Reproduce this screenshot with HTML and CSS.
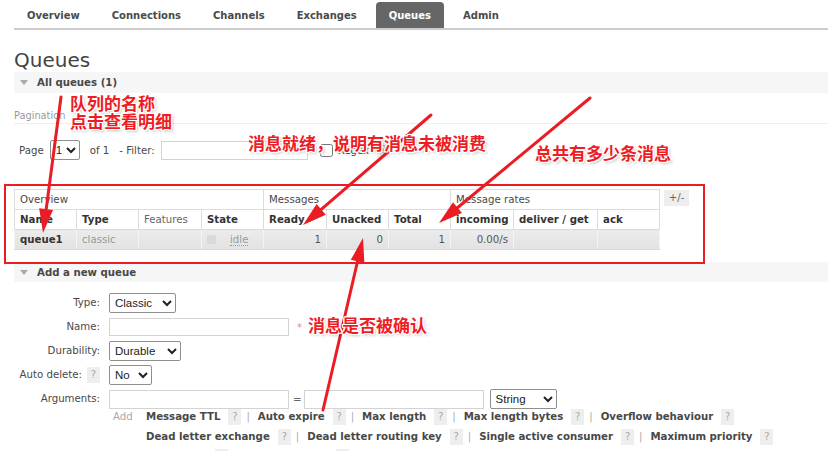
FILE: index.html
```html
<!DOCTYPE html>
<html lang="en">
<head>
<meta charset="utf-8">
<title>RabbitMQ Management - Queues</title>
<link rel="stylesheet" href="styles.css">
</head>
<body>
<div class="page">
  <nav class="menu">
    <ul>
      <li>Overview</li>
      <li>Connections</li>
      <li>Channels</li>
      <li>Exchanges</li>
      <li class="active">Queues</li>
      <li>Admin</li>
    </ul>
  </nav>
  <h1 class="title">Queues</h1>

  <section class="section">
    <h2 class="section-head"><span class="tri"></span>All queues (1)</h2>
    <div class="pagination-title">Pagination</div>
    <div class="page-row">
      <span>Page</span>
      <select class="sel sel-page"><option>1</option></select>
      <span class="of">of 1</span>
      <span class="filter-label">- Filter:</span>
      <input class="txt filter" type="text">
      <input class="chk" type="checkbox">
      <span class="regex">Regex</span>
      <span class="help help-regex">?</span>
    </div>
    <div class="table-row">
      <table class="list">
        <colgroup>
          <col class="c62"><col class="c62"><col class="c63"><col class="c62">
          <col class="c63"><col class="c62"><col class="c62">
          <col class="c63"><col class="c84"><col class="c62">
        </colgroup>
        <thead>
          <tr class="group">
            <th colspan="4">Overview</th>
            <th colspan="3">Messages</th>
            <th colspan="3">Message rates</th>
          </tr>
          <tr class="cols">
            <th>Name</th><th>Type</th><th class="plain">Features</th><th>State</th>
            <th>Ready</th><th>Unacked</th><th>Total</th>
            <th>incoming</th><th>deliver / get</th><th>ack</th>
          </tr>
        </thead>
        <tbody>
          <tr class="data">
            <td class="name">queue1</td>
            <td class="muted">classic</td>
            <td></td>
            <td class="state"><span class="state-box"></span><abbr class="idle">idle</abbr></td>
            <td class="num">1</td>
            <td class="num">0</td>
            <td class="num">1</td>
            <td class="num">0.00/s</td>
            <td></td>
            <td></td>
          </tr>
        </tbody>
      </table>
      <span class="toggle">+/-</span>
    </div>
  </section>

  <section class="section">
    <h2 class="section-head section-add"><span class="tri"></span>Add a new queue</h2>
    <form class="form">
      <label class="lbl">Type:</label>
      <div class="ctl"><select class="sel sel-type"><option>Classic</option></select></div>

      <label class="lbl">Name:</label>
      <div class="ctl"><input class="txt txt-name" type="text"><span class="req">*</span></div>

      <label class="lbl">Durability:</label>
      <div class="ctl"><select class="sel sel-dur"><option>Durable</option></select></div>

      <label class="lbl lbl-help">Auto delete: <span class="help">?</span></label>
      <div class="ctl"><select class="sel sel-no"><option>No</option></select></div>

      <label class="lbl">Arguments:</label>
      <div class="ctl"><input class="txt txt-arg" type="text"><span class="eq">=</span><input class="txt txt-arg" type="text"><select class="sel sel-str"><option>String</option></select></div>
    </form>
    <div class="add-block">
      <span class="add-link">Add</span>
      <div class="opts">
        <div class="opts-row"><span class="opt">Message TTL</span><span class="help">?</span><span class="sep">|</span><span class="opt">Auto expire</span><span class="help">?</span><span class="sep">|</span><span class="opt">Max length</span><span class="help">?</span><span class="sep">|</span><span class="opt">Max length bytes</span><span class="help">?</span><span class="sep">|</span><span class="opt">Overflow behaviour</span><span class="help">?</span></div>
        <div class="opts-row"><span class="opt">Dead letter exchange</span><span class="help">?</span><span class="sep">|</span><span class="opt">Dead letter routing key</span><span class="help">?</span><span class="sep">|</span><span class="opt">Single active consumer</span><span class="help">?</span><span class="sep">|</span><span class="opt">Maximum priority</span><span class="help">?</span></div>
        <div class="opts-row"><span class="opt">Lazy mode</span><span class="help">?</span><span class="sep">|</span><span class="opt">Master locator</span><span class="help">?</span></div>
      </div>
    </div>
  </section>
</div>

<div class="annot">
  <div class="redbox"></div>
  <svg class="arrows" width="828" height="451" viewBox="0 0 828 451" xmlns="http://www.w3.org/2000/svg">
    <g stroke="#ea1c24" stroke-width="3" fill="none" stroke-linecap="round">
      <line x1="61" y1="97" x2="45.4" y2="215.2"/>
      <line x1="431" y1="115" x2="316.6" y2="213.3"/>
      <line x1="590" y1="98" x2="452.9" y2="211.5"/>
      <line x1="323" y1="410" x2="358.9" y2="255.5"/>
    </g>
    <g fill="#ea1c24">
      <polygon points="43,233 39.2,208.3 53,210.1"/>
      <polygon points="303,225 316.6,204.1 325.8,214.7"/>
      <polygon points="439,223 453,202.3 462,213.1"/>
      <polygon points="363,238 364.4,263 350.8,259.8"/>
    </g>
  </svg>
  <div class="note note-name">队列的名称<br>点击查看明细</div>
  <div class="note note-ready">消息就绪，说明有消息未被消费</div>
  <div class="note note-total">总共有多少条消息</div>
  <div class="note note-ack">消息是否被确认</div>
</div>
</body>
</html>
```

FILE: styles.css
```css
* { box-sizing: border-box; }
html { overflow: hidden; }
body {
  margin: 0;
  font-family: "DejaVu Sans", Verdana, sans-serif;
  font-size: 10.2px;
  color: #484848;
  background: #fff;
}
.page { padding-left: 14px; }

/* top menu */
.menu { height: 30px; border-bottom: 2px solid #ccc; }
.menu ul { list-style: none; margin: 0; padding: 2px 0 0; display: flex; gap: 6px; }
.menu li {
  height: 26px; line-height: 28px; padding: 0 13px;
  font-weight: bold; font-size: 10px; color: #4a4a4a;
  border-radius: 4px 4px 0 0;
}
.menu li.active { background: #666; color: #fff; }

.title { margin: 18px 0 0; font-size: 20px; line-height: 24px; font-weight: normal; color: #444; }

.section-head {
  margin: 0; height: 21px; background: #f6f6f6;
  font-size: 10.2px; font-weight: bold; color: #484848;
  display: flex; align-items: center;
}
.section-add { margin-top: 12px; height: 20px; }
.tri {
  width: 0; height: 0;
  border-left: 4px solid transparent; border-right: 4px solid transparent;
  border-top: 5px solid #aaa;
  margin: 0 9px 0 6px;
}

.pagination-title {
  margin-top: 17px; font-size: 9.8px; line-height: 12px; color: #999;
  padding-bottom: 1px; border-bottom: 1px solid #eee;
}
.page-row { margin-top: 16px; height: 20px; display: flex; align-items: center; padding-left: 5px; }
.sel-page { margin-left: 6px; width: 30px; }
.of { margin-left: 10px; }
.filter-label { margin-left: 10px; }
.filter { margin-left: 6px; width: 147px; height: 19px; }
.chk { margin: 0 0 0 12px; width: 13px; height: 13px; }
.regex { margin-left: 5px; }
.help-regex { margin-left: 8px; }

.txt { border: 1px solid #d3d3d3; background: #fff; padding: 0 3px; font: inherit; }
.sel {
  font-family: "Liberation Sans", Arial, sans-serif; font-size: 11.5px;
  height: 20px; border: 1px solid #8f8f8f; border-radius: 2px;
  background: #fff; color: #222; padding: 0 1px;
}

.help {
  display: inline-block; width: 13px; height: 16px; line-height: 16px;
  text-align: center; background: #eee; color: #aaa;
  font-size: 10px; font-weight: normal; vertical-align: middle;
}

/* table */
.table-row { margin-top: 29px; display: flex; align-items: flex-start; }
.list { border-collapse: collapse; table-layout: fixed; width: 644px; font-size: 10.2px; }
.c62 { width: 62px; } .c63 { width: 63px; } .c84 { width: 84px; }
.list th, .list td {
  border: 1px solid #dcdcdc; height: 20px; padding: 0 5px;
  text-align: left; white-space: nowrap; overflow: hidden; line-height: 18px;
}
.list tr { height: 20px; }
.group th { font-weight: normal; color: #484848; }
.cols th { font-weight: bold; color: #333; }
.cols th.plain { font-weight: normal; color: #666; }
.data td {
  background: linear-gradient(#ececec, #e2e2e2);
  border-left-color: #f4f4f4; border-right-color: #f4f4f4; border-bottom-color: #d8d8d8;
  color: #555;
}
.data td.name { font-weight: bold; color: #333; }
.data td.muted { color: #999; }
.data td.num { text-align: right; }
.state { padding-left: 6px; }
.state-box { display: inline-block; width: 9px; height: 9px; background: #dadada; vertical-align: middle; margin-right: 14px; }
.idle { color: #999; text-decoration: none; border-bottom: 1px dotted #999; line-height: 11px; display: inline-block; }
.toggle {
  margin: 1px 0 0 4px; width: 25px; height: 16px; line-height: 16px;
  text-align: center; background: #eee; color: #666;
}

/* form */
.form {
  margin-top: 11px; display: grid; grid-template-columns: 86px auto;
  column-gap: 9px; row-gap: 4px; align-items: center;
}
.lbl { text-align: right; line-height: 20px; }
.lbl-help { display: flex; justify-content: flex-end; align-items: center; gap: 5px; white-space: nowrap; }
.ctl { display: flex; align-items: center; height: 20px; }
.sel-type { width: 67px; }
.sel-dur { width: 72px; }
.sel-no { width: 43px; }
.sel-str { width: 67px; margin-left: 6px; }
.txt-name { width: 180px; height: 18px; }
.txt-arg { width: 180px; height: 19px; }
.req { color: #e88; margin-left: 8px; }
.eq { color: #666; margin: 0 2px 0 4px; }

.add-block { display: flex; margin-left: 95px; margin-top: -2px; line-height: 20px; }
.add-link { color: #aaa; width: 37px; padding-left: 4px; }
.opts-row { white-space: nowrap; height: 20px; }
.opt { font-weight: bold; color: #484848; }
.opts .help { margin: 0 5px 0 8px; }
.sep { color: #aaa; margin-right: 8px; }

/* annotations */
.annot { position: absolute; left: 0; top: 0; width: 828px; height: 451px; pointer-events: none; }
.redbox { position: absolute; left: 4px; top: 184px; width: 701px; height: 80px; border: 2px solid #ea1c24; }
.arrows { position: absolute; left: 0; top: 0; }
.note {
  position: absolute;
  font-family: "Noto Sans CJK SC", sans-serif; font-weight: 700;
  font-size: 17px; line-height: 18px; color: #ee1c25; white-space: nowrap;
  text-shadow: 1px 0 0 #fff, -1px 0 0 #fff, 0 1px 0 #fff, 0 -1px 0 #fff,
               1px 1px 0 #fff, -1px -1px 0 #fff, 1px -1px 0 #fff, -1px 1px 0 #fff,
               2px 2px 3px rgba(0,0,0,0.25);
}
.note-name { left: 70px; top: 94px; }
.note-ready { left: 248px; top: 134px; }
.note-total { left: 535px; top: 144px; }
.note-ack { left: 308px; top: 316px; }
```
